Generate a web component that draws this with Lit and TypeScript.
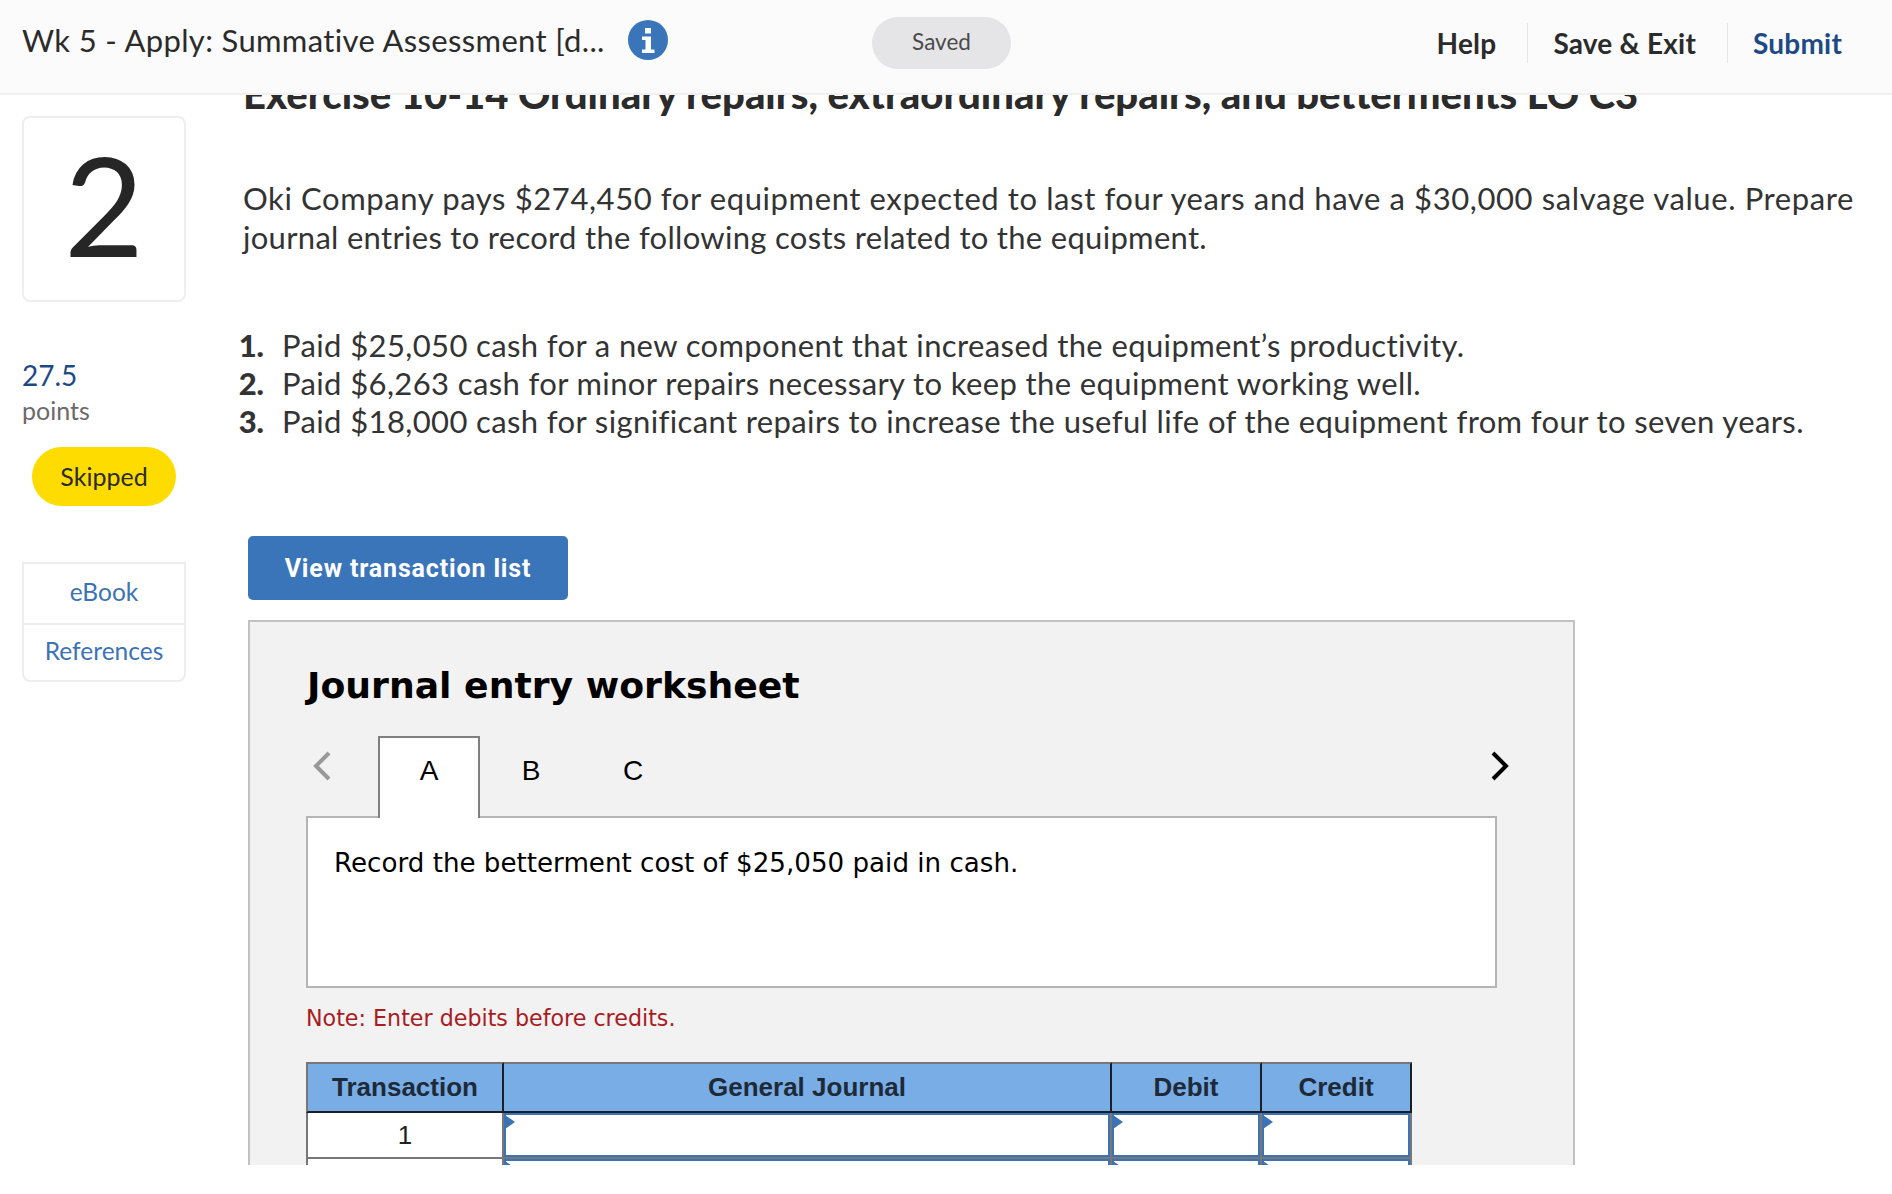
import { LitElement, html, css } from 'lit';
import { customElement } from 'lit/decorators.js';

const costs = [
	'Paid $25,050 cash for a new component that increased the equipment’s productivity.',
	'Paid $6,263 cash for minor repairs necessary to keep the equipment working well.',
	'Paid $18,000 cash for significant repairs to increase the useful life of the equipment from four to seven years.'
];

const columns = ['Transaction', 'General Journal', 'Debit', 'Credit'];

@customElement('app-root')
export class AppRoot extends LitElement {
	static styles = css`
		:host {
			display: block;
			background: #fff;
			font-family: 'Lato', 'Open Sans', sans-serif;
			font-variant-ligatures: none;
			color: #333;
		}
		.page {
			display: flex;
			flex-direction: column;
			height: 1165px;
			overflow: hidden;
		}
		header {
			position: relative;
			z-index: 2;
			flex: none;
			display: grid;
			grid-template-columns: 850px 139px 1fr;
			align-items: center;
			height: 95px;
			padding-left: 22px;
			box-sizing: border-box;
			background: #fbfbfb;
			border-bottom: 2px solid #f0f0f0;
		}
		.title {
			display: flex;
			align-items: center;
			gap: 23px;
			margin-top: -13px;
			font-size: 31px;
			letter-spacing: 0.35px;
			color: #2b2b2b;
		}
		.title svg {
			display: block;
			width: 40px;
			height: 40px;
		}
		.saved {
			height: 52px;
			margin-top: -8px;
			border-radius: 26px;
			background: #e5e5e8;
			font-size: 22.5px;
			line-height: 50px;
			text-align: center;
			color: #4a4a4a;
		}
		nav {
			display: flex;
			justify-content: flex-end;
			align-items: center;
			padding-right: 50px;
			margin-top: -8px;
			font-size: 28px;
			font-weight: 700;
			letter-spacing: 0.2px;
			color: #2b2b2b;
		}
		nav span {
			height: 40px;
			line-height: 40px;
			padding: 0 31px 0 25px;
			border-right: 1px solid #e6e6e6;
		}
		nav span:last-child {
			padding: 0 0 0 25px;
			border-right: 0;
			color: #1d4a85;
		}
		.body {
			flex: 1;
			display: grid;
			grid-template-columns: 243px 1fr;
			min-height: 0;
		}
		aside {
			padding: 21px 0 0 22px;
			width: 164px;
		}
		.num {
			height: 182px;
			border: 2px solid #eeeeee;
			border-radius: 8px;
			font-size: 138px;
			line-height: 172px;
			text-align: center;
			color: #262626;
		}
		.score {
			margin-top: 56px;
			font-size: 28px;
			line-height: 34px;
			color: #1d4a85;
		}
		.points {
			margin-top: 1px;
			font-size: 25px;
			line-height: 34px;
			color: #6a6a6a;
		}
		.skipped {
			width: 144px;
			height: 59px;
			margin: 20px 0 0 10px;
			border-radius: 30px;
			background: #ffdc00;
			font-size: 25px;
			line-height: 59px;
			text-align: center;
			color: #2b2b2b;
		}
		.links {
			margin-top: 56px;
			border: 2px solid #eeeeee;
			border-radius: 0 0 8px 8px;
			font-size: 24.5px;
			color: #3b73b5;
			text-align: center;
		}
		.links div {
			height: 59px;
			line-height: 55px;
		}
		.links div + div {
			border-top: 2px solid #eeeeee;
			height: 55px;
			line-height: 51px;
		}
		main {
			min-width: 0;
		}
		h1 {
			margin: -24px 0 0;
			font-size: 40px;
			line-height: 46px;
			font-weight: 900;
			color: #2b2b2b;
			white-space: nowrap;
		}
		.intro {
			margin: 62px 0 0;
			width: 1625px;
			font-size: 31px;
			letter-spacing: 0.3px;
			line-height: 38.5px;
		}
		.intro span {
			letter-spacing: 0.6px;
		}
		ol {
			margin: 71px 0 0 -5px;
			padding: 0;
			list-style: none;
			font-size: 31px;
			letter-spacing: 0.38px;
			line-height: 37.8px;
		}
		li {
			display: grid;
			grid-template-columns: 26px 1fr;
			column-gap: 18px;
		}
		li b {
			text-align: right;
			font-weight: 900;
			letter-spacing: 0;
		}
		.list-btn {
			display: block;
			width: 320px;
			height: 64px;
			margin: 96px 0 0 5px;
			border: 0;
			border-radius: 5px;
			background: #3b75b9;
			font-family: 'Roboto', sans-serif;
			font-size: 25px;
			font-weight: 700;
			color: #fff;
			text-align: center;
			letter-spacing: 0.85px;
		}
		.sheet {
			width: 1327px;
			height: 600px;
			margin: 20px 0 0 5px;
			padding: 38px 0 0 56px;
			box-sizing: border-box;
			background: #f2f2f2;
			border: 2px solid #c2c2c2;
			font-family: 'DejaVu Sans', sans-serif;
			color: #000;
		}
		h2 {
			margin: 1px 0 0 1px;
			font-size: 36.2px;
			line-height: 50px;
			font-weight: 700;
		}
		.tabs {
			display: flex;
			align-items: flex-end;
			height: 81px;
			margin-top: 24px;
			width: 1204px;
		}
		.tabs svg {
			flex: none;
			width: 20px;
			height: 32px;
			margin-bottom: 34px;
		}
		.prev {
			margin: 0 46px 0 6px;
		}
		.next {
			margin-left: auto;
		}
		.tab {
			width: 102px;
			height: 81px;
			box-sizing: border-box;
			padding-top: 18px;
			font-size: 28px;
			line-height: 36px;
			text-align: center;
			font-family: 'Liberation Sans', sans-serif;
		}
		.tab.on {
			position: relative;
			z-index: 1;
			height: 82px;
			margin-bottom: -2px;
			padding-top: 15px;
			background: #fff;
			border: 2px solid #808080;
			border-bottom: 0;
		}
		.prompt {
			width: 1191px;
			height: 172px;
			box-sizing: border-box;
			padding: 27px 26px;
			background: #fff;
			border: 2px solid #b5b5b5;
			font-size: 26.15px;
			line-height: 36px;
		}
		.note {
			margin: 15px 0 0;
			font-size: 22.2px;
			line-height: 30px;
			color: #a81c1f;
		}
		table {
			width: 1106px;
			margin-top: 29px;
			table-layout: fixed;
			border-collapse: separate;
			border-spacing: 0;
			font-family: 'Liberation Sans', sans-serif;
			font-size: 26px;
		}
		th {
			height: 47px;
			padding: 0;
			background: #78ade6;
			border-top: 2px solid #777;
			border-right: 2px solid #1b1f28;
			border-bottom: 2px solid #1b1f28;
			color: #1f2a38;
		}
		th:first-child,
		td:first-child {
			border-left: 2px solid #777;
		}
		td {
			height: 44px;
			padding: 0;
			background: #fff;
			text-align: center;
			color: #222;
			border-right: 2px solid #777;
			border-bottom: 2px solid #777;
		}
		.cell {
			position: relative;
			box-sizing: border-box;
			height: 44px;
			border: 2.5px solid #3b73b5;
		}
		.cell::before {
			content: '';
			position: absolute;
			left: -1px;
			top: 0;
			border-left: 10px solid #3b73b5;
			border-top: 7px solid transparent;
			border-bottom: 7px solid transparent;
		}
	`;

	row(n: string) {
		return html`<tr>
			<td>${n}</td>
			<td><div class="cell"></div></td>
			<td><div class="cell"></div></td>
			<td><div class="cell"></div></td>
		</tr>`;
	}

	render() {
		return html`<div class="page">
			<header>
				<div class="title">
					<span>Wk 5 - Apply: Summative Assessment [d...</span>
					<svg viewBox="0 0 40 40">
						<circle cx="20" cy="20" r="20" fill="#3b75b9" />
						<rect x="17" y="8" width="6" height="5.5" fill="#fff" />
						<path d="M14 16.500h9v13h3.500v3.500h-12.500v-3.500h3.500v-9.500h-3.500z" fill="#fff" />
					</svg>
				</div>
				<div class="saved">Saved</div>
				<nav>
					<span>Help</span>
					<span>Save &amp; Exit</span>
					<span>Submit</span>
				</nav>
			</header>
			<div class="body">
				<aside>
					<div class="num">2</div>
					<div class="score">27.5</div>
					<div class="points">points</div>
					<div class="skipped">Skipped</div>
					<div class="links">
						<div>eBook</div>
						<div>References</div>
					</div>
				</aside>
				<main>
					<h1>Exercise 10-14 Ordinary repairs, extraordinary repairs, and betterments LO C3</h1>
					<p class="intro">
						<span>Oki Company pays $274,450 for equipment expected to last four years and have a $30,000
						salvage value. Prepare</span> journal entries to record the following costs related to the
						equipment.
					</p>
					<ol>
						${costs.map((c, i) => html`<li><b>${i + 1}.</b><span>${c}</span></li>`)}
					</ol>
					<button class="list-btn">View transaction list</button>
					<section class="sheet">
						<h2>Journal entry worksheet</h2>
						<div class="tabs">
							<svg class="prev" viewBox="0 0 20 32">
								<path d="M17 3 4 16l13 13" fill="none" stroke="#999" stroke-width="4" />
							</svg>
							<div class="tab on">A</div>
							<div class="tab">B</div>
							<div class="tab">C</div>
							<svg class="next" viewBox="0 0 20 32">
								<path d="M3 3l13 13L3 29" fill="none" stroke="#000" stroke-width="4" />
							</svg>
						</div>
						<div class="prompt">Record the betterment cost of $25,050 paid in cash.</div>
						<p class="note">Note: Enter debits before credits.</p>
						<table>
							<colgroup>
								<col style="width:198px" />
								<col style="width:608px" />
								<col style="width:150px" />
								<col style="width:150px" />
							</colgroup>
							<thead>
								<tr>${columns.map((c) => html`<th>${c}</th>`)}</tr>
							</thead>
							<tbody>${this.row('1')}${this.row('')}</tbody>
						</table>
					</section>
				</main>
			</div>
		</div>`;
	}
}
